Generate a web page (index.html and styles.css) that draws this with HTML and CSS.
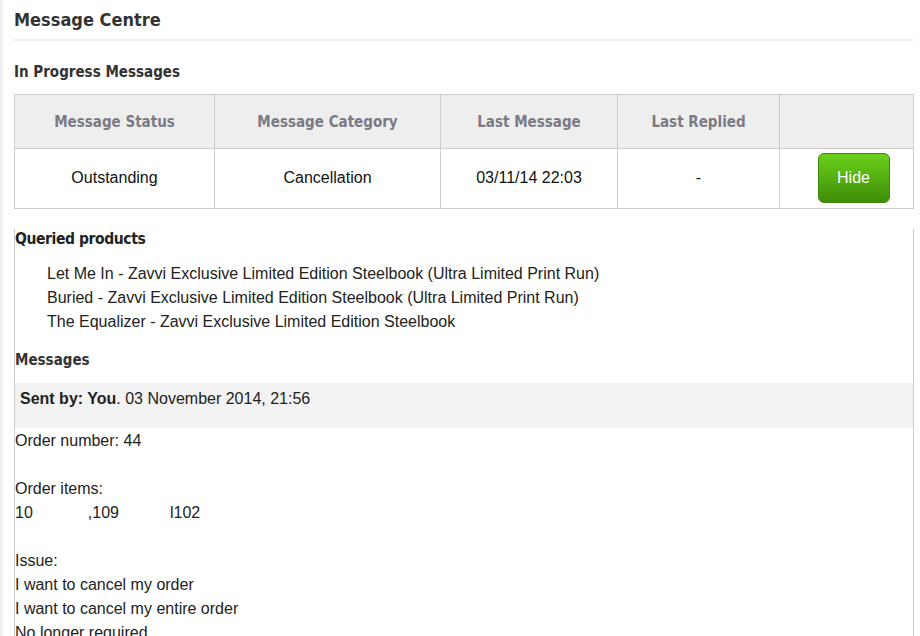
FILE: index.html
```html
<!DOCTYPE html>
<html lang="en">
<head>
    <meta charset="UTF-8">
    <title>Message Centre</title>
    <link rel="stylesheet" href="styles.css">
</head>
<body>
<div class="page">
    <h1 class="page-title">Message Centre</h1>

    <h2 class="section-title">In Progress Messages</h2>

    <table class="messages-table">
        <thead>
            <tr>
                <th class="col-status">Message Status</th>
                <th class="col-category">Message Category</th>
                <th class="col-last">Last Message</th>
                <th class="col-replied">Last Replied</th>
                <th class="col-action"></th>
            </tr>
        </thead>
        <tbody>
            <tr>
                <td>Outstanding</td>
                <td>Cancellation</td>
                <td>03/11/14 22:03</td>
                <td>-</td>
                <td><button type="button" class="btn-hide">Hide</button></td>
            </tr>
        </tbody>
    </table>

    <div class="message-detail">
        <h3 class="detail-title">Queried products</h3>
        <ul class="product-list">
            <li>Let Me In - Zavvi Exclusive Limited Edition Steelbook (Ultra Limited Print Run)</li>
            <li>Buried - Zavvi Exclusive Limited Edition Steelbook (Ultra Limited Print Run)</li>
            <li>The Equalizer - Zavvi Exclusive Limited Edition Steelbook</li>
        </ul>

        <h3 class="messages-title">Messages</h3>
        <div class="message-head">
            <b>Sent by: You</b>. 03 November 2014, 21:56
        </div>
        <div class="message-body">
            <p>Order number: 44</p>
            <p>Order items:<br>10<span class="gap-a"></span>,109<span class="gap-b"></span>l102</p>
            <p>Issue:<br>I want to cancel my order<br>I want to cancel my entire order<br>No longer required</p>
        </div>
    </div>
</div>
</body>
</html>
```

FILE: styles.css
```css
* {
    margin: 0;
    padding: 0;
    box-sizing: border-box;
}
body {
    background: #fff;
    border-left: 3px solid #f0f0f0;
    font-family: 'Liberation Sans', Arial, sans-serif;
    color: #222;
    min-height: 636px;
}
.page {
    margin-left: 11px;
    width: 900px;
}
.page-title {
    font-family: 'DejaVu Sans Condensed', 'DejaVu Sans', sans-serif;
    font-weight: bold;
    font-size: 18px;
    color: #333;
    line-height: 24px;
    padding-top: 8px;
    padding-bottom: 7px;
    border-bottom: 2px solid #eee;
}
.section-title {
    font-family: 'DejaVu Sans Condensed', 'DejaVu Sans', sans-serif;
    font-weight: bold;
    font-size: 15px;
    color: #333;
    line-height: 20px;
    margin-top: 21px;
    margin-bottom: 12px;
}
.messages-table {
    width: 100%;
    border-collapse: collapse;
    table-layout: fixed;
}
.messages-table th,
.messages-table td {
    border: 1px solid #ccc;
    text-align: center;
}
.messages-table th {
    background: #eee;
    color: #7b7b85;
    font-family: 'DejaVu Sans Condensed', 'DejaVu Sans', sans-serif;
    font-weight: bold;
    font-size: 15px;
    height: 54px;
    padding-top: 1px;
}
.messages-table td {
    font-size: 16px;
    height: 60px;
    color: #111;
    padding-bottom: 2px;
}
.col-status { width: 200px; }
.col-category { width: 226px; }
.col-last { width: 177px; }
.col-replied { width: 162px; }
.btn-hide {
    display: block;
    margin: 0 auto;
    position: relative;
    left: 7px;
    width: 72px;
    height: 50px;
    border: 1px solid #3f8a0c;
    border-radius: 6px;
    background: linear-gradient(#6ad11c, #3f8d08);
    color: #fff;
    font-family: 'Liberation Sans', Arial, sans-serif;
    font-size: 16px;
    cursor: pointer;
}
.message-detail {
    border-left: 1px solid #ccc;
    border-right: 1px solid #ccc;
    padding-bottom: 20px;
}
.detail-title {
    font-family: 'Liberation Sans Narrow', 'DejaVu Sans Condensed', sans-serif;
    font-weight: bold;
    font-size: 15.5px;
    letter-spacing: -0.4px;
    color: #222;
    line-height: 20px;
    margin-top: 20px;
    margin-bottom: 13px;
}
.product-list {
    list-style: none;
    padding-left: 32px;
    font-size: 16px;
    line-height: 24px;
}
.messages-title {
    font-family: 'DejaVu Sans Condensed', 'DejaVu Sans', sans-serif;
    font-weight: bold;
    font-size: 15px;
    color: #333;
    line-height: 20px;
    margin-top: 16px;
    margin-bottom: 13px;
}
.message-head {
    background: #f2f2f2;
    padding: 6px 5px;
    height: 45px;
    font-size: 16px;
    line-height: 20px;
}
.message-body {
    font-size: 16px;
    line-height: 24px;
    padding-top: 1px;
}
.message-body p {
    margin-bottom: 24px;
}
.gap-a {
    display: inline-block;
    width: 55px;
}
.gap-b {
    display: inline-block;
    width: 51px;
}
```
